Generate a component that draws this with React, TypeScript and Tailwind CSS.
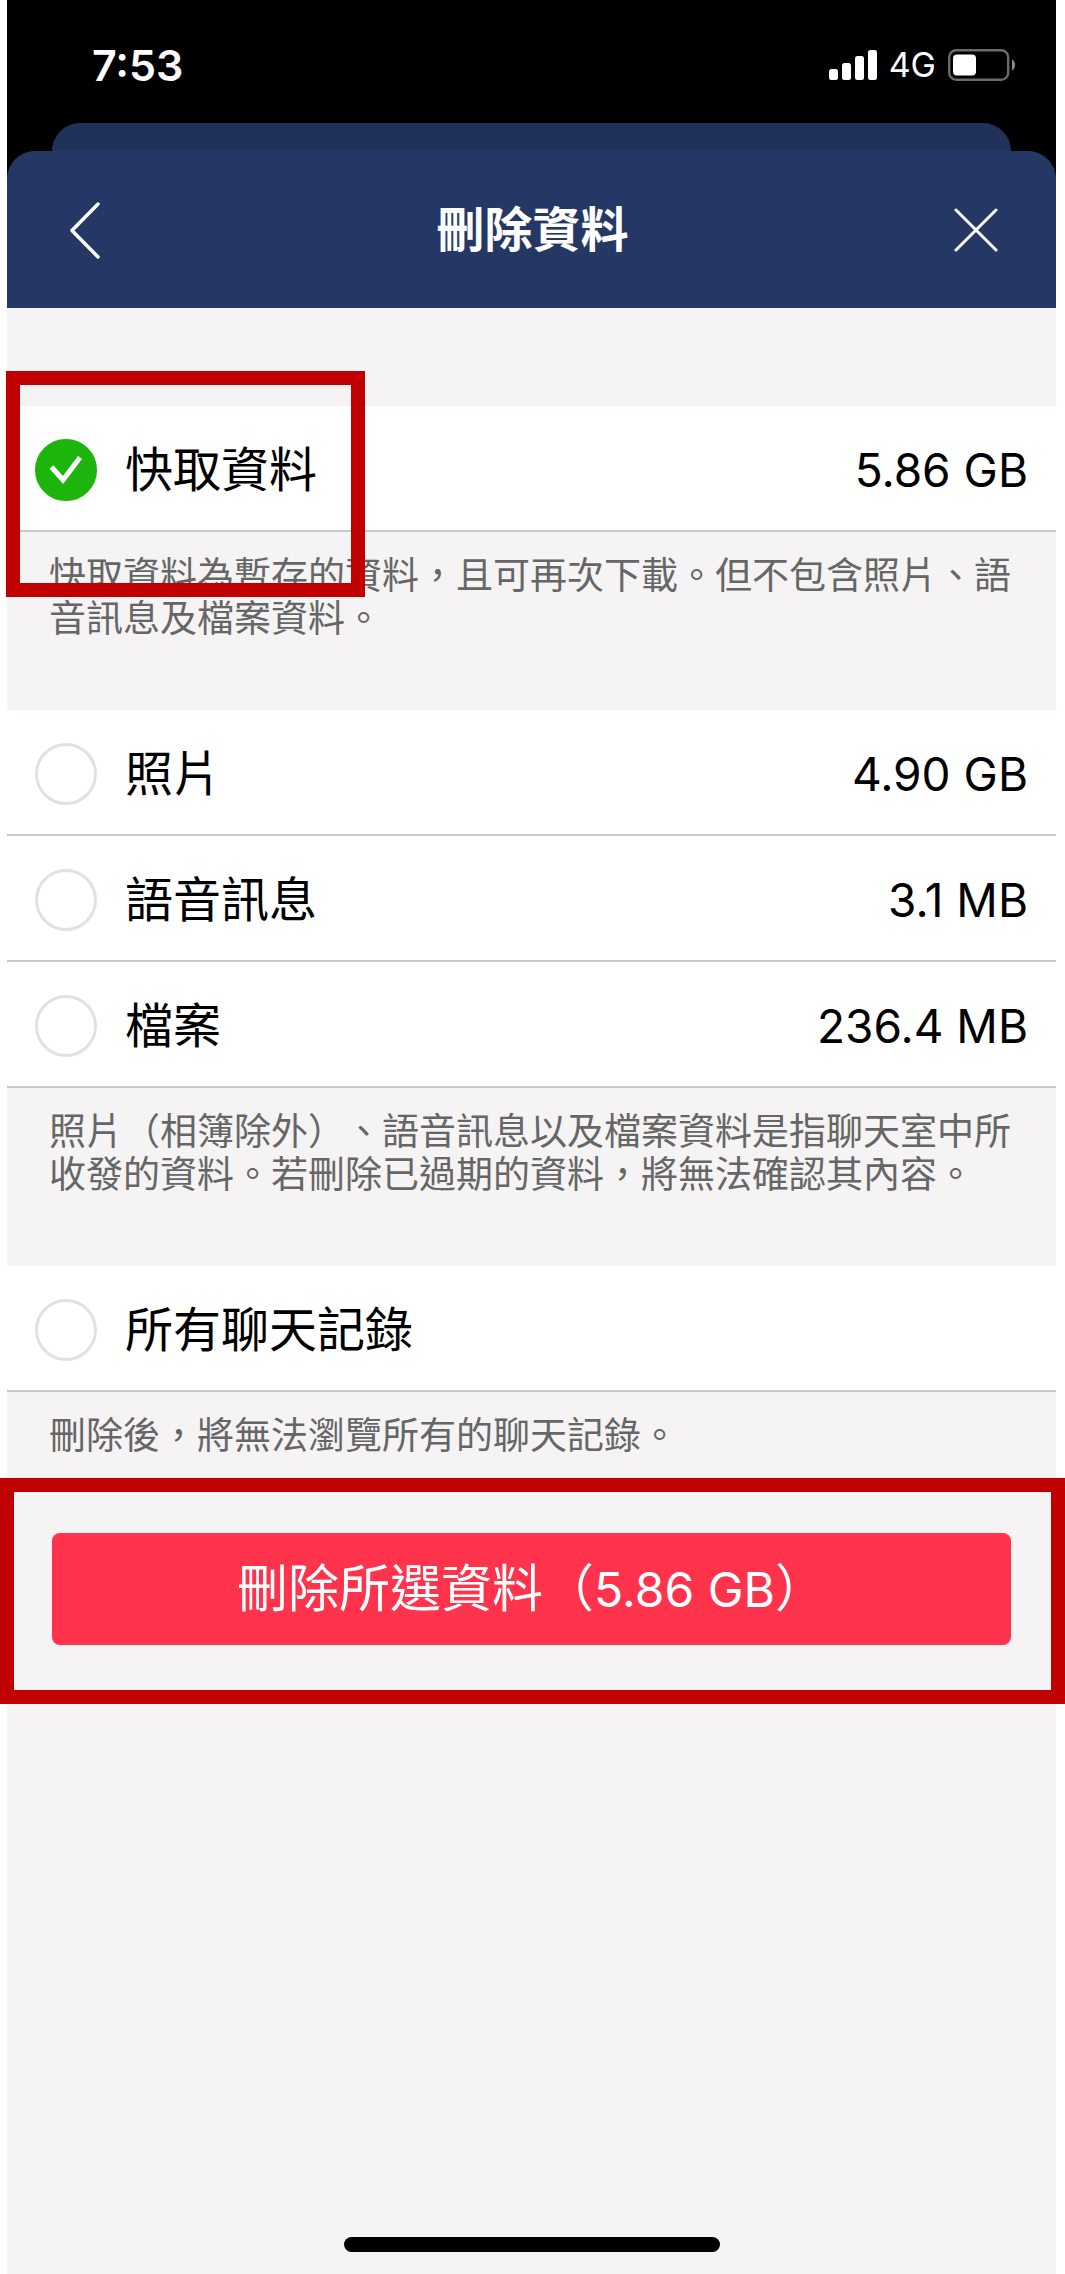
import { useState } from "react";

type Item = { id: string; label: string; size?: string };

const cacheItems: Item[] = [{ id: "cache", label: "快取資料", size: "5.86 GB" }];

const mediaItems: Item[] = [
  { id: "photos", label: "照片", size: "4.90 GB" },
  { id: "voice", label: "語音訊息", size: "3.1 MB" },
  { id: "files", label: "檔案", size: "236.4 MB" },
];

const chatItems: Item[] = [{ id: "chats", label: "所有聊天記錄" }];

function StatusBar() {
  return (
    <div className="flex h-[123px] items-start justify-between pt-[38px] pl-[85px] pr-[40px] text-white">
      <span className="text-[43px] leading-[54px] font-semibold">7:53</span>
      <div className="flex h-[54px] items-center gap-3">
        <svg width="48" height="30" viewBox="0 0 48 30" fill="currentColor" aria-hidden="true">
          <rect x="0" y="19" width="9" height="11" rx="2.5" />
          <rect x="13" y="13" width="9" height="17" rx="2.5" />
          <rect x="26" y="6" width="9" height="24" rx="2.5" />
          <rect x="39" y="0" width="9" height="30" rx="2.5" />
        </svg>
        <span className="text-[34px] leading-[54px]">4G</span>
        <svg width="68" height="32" viewBox="0 0 68 32" aria-hidden="true">
          <rect x="1.2" y="1.2" width="59" height="29.6" rx="7" fill="none" stroke="#6b6b6b" strokeWidth="2.4" />
          <rect x="5" y="5.5" width="23" height="21" rx="4" fill="#fff" />
          <path d="M64 10.5c4 1.5 4 9.500 0 11z" fill="#8a8a8a" />
        </svg>
      </div>
    </div>
  );
}

function Header() {
  return (
    <header className="bg-black">
      <StatusBar />
      {/* edge of the sheet that sits behind this one */}
      <div className="mx-[45px] h-7 rounded-t-[28px] bg-[#20325a]" />
      <div className="flex h-[157px] items-center justify-between rounded-t-[28px] bg-[#253865] pl-[60px] pr-[58px] text-white">
        <button type="button" aria-label="返回" className="flex w-12 justify-start">
          <svg width="34" height="58" viewBox="0 0 34 58" fill="none" stroke="currentColor" strokeWidth="3.500" strokeLinecap="round" strokeLinejoin="round">
            <path d="M31 3L5 29.500L31 56" />
          </svg>
        </button>
        <h1 className="text-[48px] leading-[60px] font-bold">刪除資料</h1>
        <button type="button" aria-label="關閉" className="flex w-12 justify-end">
          <svg width="44" height="46" viewBox="0 0 44 46" fill="none" stroke="currentColor" strokeWidth="3" strokeLinecap="round">
            <path d="M2 3L42 43M42 3L2 43" />
          </svg>
        </button>
      </div>
    </header>
  );
}

function Row({ item, checked, onToggle }: { item: Item; checked: boolean; onToggle: () => void }) {
  return (
    <li className="border-b-2 border-[#c9c9cb] bg-white">
      <label className="flex h-[124px] items-center gap-7 px-7 pt-[3px]">
        <span className="grid place-items-center">
          <input
            type="checkbox"
            checked={checked}
            onChange={onToggle}
            className="col-start-1 row-start-1 size-[62px] appearance-none rounded-full border-[3px] border-[#e1e1e1] bg-white checked:border-[#1db40b] checked:bg-[#1db40b]"
          />
          {checked && (
            <svg className="pointer-events-none col-start-1 row-start-1" width="34" height="30" viewBox="0 0 34 30" fill="none" stroke="#fff" strokeWidth="5" aria-hidden="true">
              <path d="M2.500 12L14 25L31 2.500" />
            </svg>
          )}
        </span>
        <span className="flex-1 text-[48px] leading-[60px] text-black">{item.label}</span>
        {item.size && <span className="text-[46px] leading-[60px] text-black">{item.size}</span>}
      </label>
    </li>
  );
}

function Note({ children }: { children: string }) {
  return (
    <p className="px-[42px] pt-[22px] text-[37px] leading-[43px] text-[#666] [text-spacing-trim:space-all]">
      {children}
    </p>
  );
}

export default function App() {
  const [selected, setSelected] = useState<string[]>(["cache"]);

  const toggle = (id: string) =>
    setSelected((prev) => (prev.includes(id) ? prev.filter((s) => s !== id) : [...prev, id]));

  const renderRows = (items: Item[]) => (
    <ul>
      {items.map((item) => (
        <Row key={item.id} item={item} checked={selected.includes(item.id)} onToggle={() => toggle(item.id)} />
      ))}
    </ul>
  );

  return (
    <div lang="zh-Hant" className="min-h-screen bg-white pl-[7px] pr-[9px] font-['Inter','Noto_Sans_CJK_TC',sans-serif]">
      <div className="flex min-h-screen flex-col bg-[#f5f3f4]">
        <Header />

        <main className="pt-[98px]">
          <section className="relative pb-[70px]">
            {renderRows(cacheItems)}
            <Note>快取資料為暫存的資料，且可再次下載。但不包含照片、語音訊息及檔案資料。</Note>
            <div className="pointer-events-none absolute -left-px -top-[35px] h-[226px] w-[359px] border-[14px] border-[#c00000]" />
          </section>

          <section className="pb-[70px]">
            {renderRows(mediaItems)}
            <Note>照片（相簿除外）、語音訊息以及檔案資料是指聊天室中所收發的資料。若刪除已過期的資料，將無法確認其內容。</Note>
          </section>

          <section className="pb-[21px]">
            {renderRows(chatItems)}
            <Note>刪除後，將無法瀏覽所有的聊天記錄。</Note>
          </section>

          <div className="relative px-[45px] pt-[55px] pb-[59px]">
            <button type="button" className="h-28 w-full rounded-lg bg-[#ff334b] text-[51px] leading-[64px] text-white">
              刪除所選資料（<span className="text-[48px]">5.86 GB</span>）
            </button>
            <div className="pointer-events-none absolute inset-y-0 -left-[7px] -right-[9px] border-[14px] border-[#c00000]" />
          </div>
        </main>

        <footer className="mt-auto flex justify-center pb-[22px]">
          <div className="h-[15px] w-[376px] rounded-full bg-black" />
        </footer>
      </div>
    </div>
  );
}
